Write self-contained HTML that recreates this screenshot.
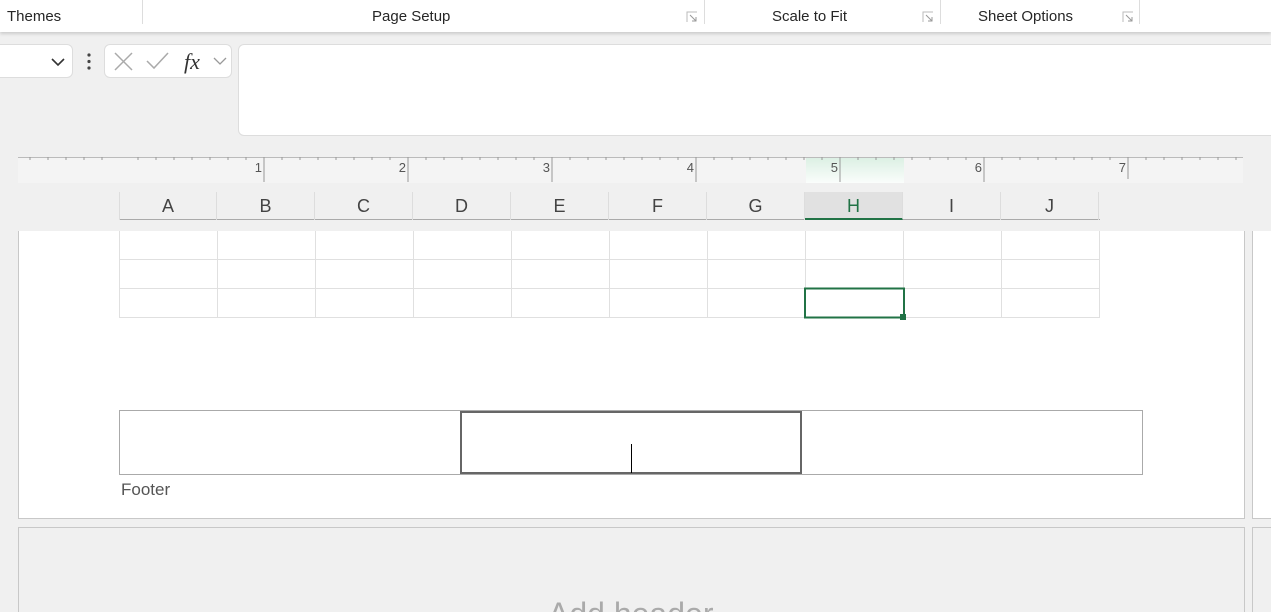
<!DOCTYPE html>
<html><head><meta charset="utf-8"><style>
*{margin:0;padding:0;box-sizing:border-box}
html,body{width:1271px;height:612px;overflow:hidden}
body{background:#f0f0f0;font-family:"Liberation Sans",sans-serif;position:relative;color:#333}
.a{position:absolute}
.rib{left:0;top:0;width:1271px;height:32px;background:#fff;box-shadow:0 2px 3px rgba(0,0,0,.15)}
.rib span{position:absolute;top:8px;font-size:15px;color:#262626}
.div{position:absolute;top:0;width:1px;height:24px;background:#ddd}
.lau{position:absolute;top:11px}
.col{position:absolute;top:192px;height:28px;width:98px;text-align:center;font-size:18px;line-height:28px;color:#444;border-right:1px solid #ddd}
.box{background:#fff;border:1px solid #ddd;border-radius:6px}
</style></head><body>
<div class="a rib">
<span style="left:7px">Themes</span>
<div class="div" style="left:142px"></div>
<span style="left:372px">Page Setup</span>
<svg class="lau" style="left:686px" width="12" height="12"><path d="M1 11V1h10" stroke="#bbb" fill="none"/><path d="M4 4l6 6M10 6v4H6" stroke="#999" fill="none"/></svg>
<div class="div" style="left:704px"></div>
<span style="left:772px">Scale to Fit</span>
<svg class="lau" style="left:922px" width="12" height="12"><path d="M1 11V1h10" stroke="#bbb" fill="none"/><path d="M4 4l6 6M10 6v4H6" stroke="#999" fill="none"/></svg>
<div class="div" style="left:940px"></div>
<span style="left:978px">Sheet Options</span>
<svg class="lau" style="left:1122px" width="12" height="12"><path d="M1 11V1h10" stroke="#bbb" fill="none"/><path d="M4 4l6 6M10 6v4H6" stroke="#999" fill="none"/></svg>
<div class="div" style="left:1139px"></div>
</div>
<div class="a box" style="left:-10px;top:44px;width:83px;height:34px"></div>
<svg class="a" style="left:50px;top:56px" width="16" height="12"><path d="M2 3l6 6 6-6" stroke="#333" stroke-width="1.6" fill="none"/></svg>
<svg class="a" style="left:85px;top:52px" width="8" height="20"><circle cx="4" cy="3" r="1.6" fill="#444"/><circle cx="4" cy="9.5" r="1.6" fill="#444"/><circle cx="4" cy="16" r="1.6" fill="#444"/></svg>
<div class="a box" style="left:104px;top:44px;width:128px;height:34px"></div>
<svg class="a" style="left:112px;top:50px" width="120" height="24"><path d="M3 3l17 17M20 3L3 20" stroke="#aaa" stroke-width="1.5" fill="none"/><path d="M35 11l7 7 14-15" stroke="#aaa" stroke-width="1.5" fill="none"/><path d="M102 8l6 6 6-6" stroke="#999" stroke-width="1.3" fill="none"/><text x="72" y="19" font-family="Liberation Serif,serif" font-style="italic" font-size="22" fill="#333">fx</text></svg>
<div class="a box" style="left:238px;top:44px;width:1045px;height:92px"></div>
<div class="a" style="left:18px;top:157px;width:1225px;height:26px;background:#f4f4f4;border-top:1px solid #bbb"></div>
<div class="a" style="left:806px;top:158px;width:98px;height:25px;background:linear-gradient(#dcf0e4,#fafdfb)"></div>
<svg class="a" style="left:0;top:157px" width="1271" height="30">
<g stroke="#999" stroke-width="1">
<path d="M30 0v3M48 0v3M66 0v3M84 0v3M102 0v3M138 0v3M156 0v3M174 0v3M192 0v3M210 0v3M228 0v3M246 0v3M282 0v3M300 0v3M318 0v3M336 0v3M354 0v3M372 0v3M390 0v3M426 0v3M444 0v3M462 0v3M480 0v3M498 0v3M516 0v3M534 0v3M570 0v3M588 0v3M606 0v3M624 0v3M642 0v3M660 0v3M678 0v3M714 0v3M732 0v3M750 0v3M768 0v3M786 0v3M804 0v3M822 0v3M858 0v3M876 0v3M894 0v3M912 0v3M930 0v3M948 0v3M966 0v3M1002 0v3M1020 0v3M1038 0v3M1056 0v3M1074 0v3M1092 0v3M1110 0v3M1146 0v3M1164 0v3M1182 0v3M1200 0v3M1218 0v3M1236 0v3"/>
<path d="M264 0v25M408 0v25M552 0v25M696 0v25M840 0v25M984 0v25M1128 0v22"/>
</g>
<g font-size="13" fill="#555" text-anchor="end"><text x="262" y="15">1</text><text x="406" y="15">2</text><text x="550" y="15">3</text><text x="694" y="15">4</text><text x="838" y="15">5</text><text x="982" y="15">6</text><text x="1126" y="15">7</text></g>
</svg>
<div class="a" style="left:119px;top:219px;width:981px;height:1px;background:#aaa"></div>
<div class="col" style="left:119px;border-left:1px solid #ddd">A</div>
<div class="col" style="left:217px">B</div>
<div class="col" style="left:315px">C</div>
<div class="col" style="left:413px">D</div>
<div class="col" style="left:511px">E</div>
<div class="col" style="left:609px">F</div>
<div class="col" style="left:707px">G</div>
<div class="col" style="left:805px;background:#e1e1e1;color:#217346;border-bottom:2px solid #217346">H</div>
<div class="col" style="left:903px">I</div>
<div class="col" style="left:1001px">J</div>
<div class="a" style="left:18px;top:231px;width:1227px;height:288px;background:#fff;border:1px solid #c8c8c8;border-top:none"></div>
<div class="a" style="left:1252px;top:231px;width:30px;height:288px;background:#fff;border:1px solid #c8c8c8;border-top:none"></div>
<svg class="a" style="left:0;top:231px" width="1271" height="100">
<g stroke="#e0e0e0" stroke-width="1"><path d="M119.5 0v86.5M217.5 0v86M315.5 0v86M413.5 0v86M511.5 0v86M609.5 0v86M707.5 0v86M805.5 0v86M903.5 0v86M1001.5 0v86M1099.5 0v86.5M119 28.5h981M119 57.5h981M119 86.5h981"/></g>
<rect x="805" y="57.5" width="99" height="29" fill="none" stroke="#217346" stroke-width="2"/>
<rect x="900" y="83" width="6" height="6" fill="#217346"/>
</svg>
<div class="a" style="left:119px;top:410px;width:1024px;height:65px;border:1px solid #aaa"></div>
<div class="a" style="left:460px;top:411px;width:342px;height:63px;border:2px solid #666"></div>
<div class="a" style="left:631px;top:444px;width:1px;height:29px;background:#000"></div>
<div class="a" style="left:121px;top:480px;font-size:17px;color:#555">Footer</div>
<div class="a" style="left:18px;top:527px;width:1227px;height:100px;border:1px solid #c8c8c8"></div>
<div class="a" style="left:1252px;top:527px;width:30px;height:100px;border:1px solid #c8c8c8"></div>
<div class="a" style="left:548px;top:596px;font-size:32px;color:#aaa;white-space:nowrap">Add header</div>
</body></html>
